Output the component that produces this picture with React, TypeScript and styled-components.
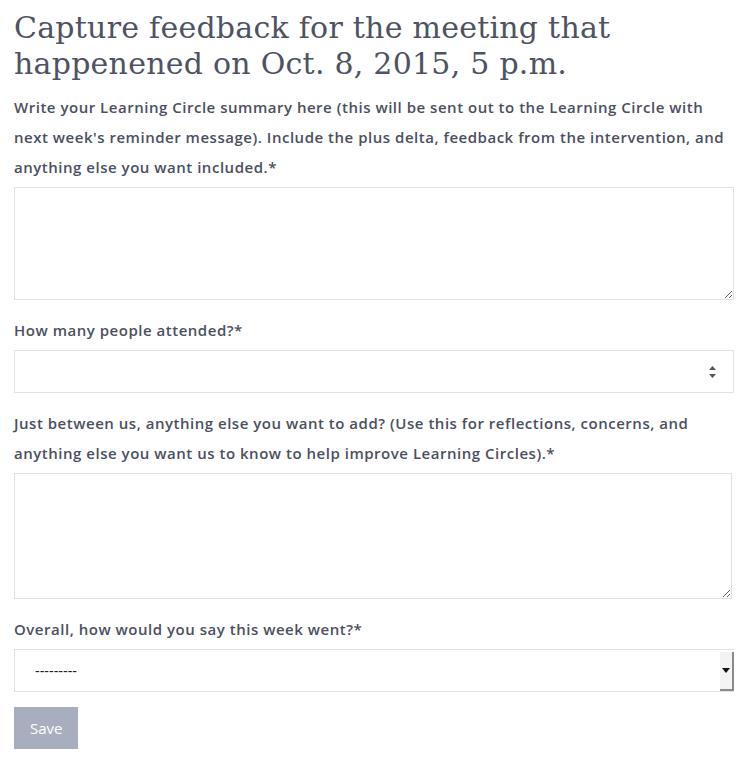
import React from "react";
import styled, { createGlobalStyle } from "styled-components";

const Global = createGlobalStyle`
  html, body { margin: 0; padding: 0; background: #fff; }
  body { font-family: "Open Sans", "Liberation Sans", sans-serif; }
  * { box-sizing: border-box; }
`;

const Page = styled.div`
  padding: 10px 15px 0 14px;
`;

const Title = styled.h1`
  margin: 0 0 10px;
  font-family: "DejaVu Serif", "Liberation Serif", serif;
  font-weight: 400;
  font-size: 30px;
  line-height: 36px;
  color: #4e5363;
  letter-spacing: 0.25px;
`;

const Group = styled.div`
  margin-bottom: 15px;
`;

const Label = styled.label`
  display: block;
  margin-bottom: 5px;
  font-size: 15px;
  font-weight: 600;
  line-height: 30px;
  letter-spacing: 0.52px;
  color: #4b5060;
`;

const TextArea = styled.textarea<{ $h: number; $w?: string }>`
  display: block;
  width: ${(p) => p.$w ?? "100%"};
  height: ${(p) => p.$h}px;
  border: 1px solid #dce3ea;
  border-radius: 0;
  padding: 8px;
  font-family: inherit;
  font-size: 14px;
  resize: vertical;
  outline: none;
`;

const NumberWrap = styled.div`
  position: relative;
`;

const NumberInput = styled.input`
  display: block;
  width: 100%;
  height: 43px;
  border: 1px solid #dce3ea;
  padding: 0 12px;
  font-family: inherit;
  font-size: 14px;
  outline: none;
  &::-webkit-inner-spin-button,
  &::-webkit-outer-spin-button { -webkit-appearance: none; margin: 0; }
`;

const Spinner = styled.div`
  position: absolute;
  right: 18px;
  top: 50%;
  transform: translateY(-50%);
  display: flex;
  flex-direction: column;
  gap: 4px;
  pointer-events: none;
`;

const SelectWrap = styled.div`
  position: relative;
  height: 43px;
  border: 1px solid #dce3ea;
  border-right: none;
  display: flex;
  align-items: stretch;
`;

const Select = styled.select`
  flex: 1;
  appearance: none;
  border: none;
  background: transparent;
  padding: 0 0 0 20px;
  font-family: "Liberation Sans", sans-serif;
  font-size: 14px;
  color: #222;
  outline: none;
`;

const SelectArrow = styled.div`
  width: 14px;
  background: #f3f3f3;
  border-right: 2px solid #8a8a8a;
  border-bottom: 2px solid #8a8a8a;
  margin: 2px 0 0 0;
  display: flex;
  align-items: center;
  justify-content: center;
  pointer-events: none;
`;

const SaveButton = styled.button`
  display: block;
  margin-top: 1px;
  height: 42px;
  padding: 0 16px;
  border: none;
  border-radius: 0;
  background: #a9aebf;
  color: #fff;
  font-family: "Open Sans", sans-serif;
  font-size: 15px;
`;

export default function App() {
  return (
    <Page>
      <Global />
      <Title>
        Capture feedback for the meeting that happenened on Oct. 8, 2015, 5 p.m.
      </Title>
      <Group>
        <Label>
          Write your Learning Circle summary here (this will be sent out to the Learning Circle with
          next week's reminder message). Include the plus delta, feedback from the intervention, and
          anything else you want included.*
        </Label>
        <TextArea $h={113} />
      </Group>
      <Group>
        <Label>How many people attended?*</Label>
        <NumberWrap>
          <NumberInput type="number" />
          <Spinner>
            <svg width="7" height="4" viewBox="0 0 7 4"><path d="M0 4 L3.5 0 L7 4Z" fill="#555" /></svg>
            <svg width="7" height="4" viewBox="0 0 7 4"><path d="M0 0 L3.5 4 L7 0Z" fill="#555" /></svg>
          </Spinner>
        </NumberWrap>
      </Group>
      <Group>
        <Label>
          Just between us, anything else you want to add? (Use this for reflections, concerns, and
          anything else you want us to know to help improve Learning Circles).*
        </Label>
        <TextArea $h={126} $w="718px" />
      </Group>
      <Group>
        <Label>Overall, how would you say this week went?*</Label>
        <SelectWrap>
          <Select defaultValue="">
            <option value="">---------</option>
          </Select>
          <SelectArrow>
            <svg width="8" height="5" viewBox="0 0 8 5"><path d="M0 0 L8 0 L4 5Z" fill="#111" /></svg>
          </SelectArrow>
        </SelectWrap>
      </Group>
      <SaveButton>Save</SaveButton>
    </Page>
  );
}
